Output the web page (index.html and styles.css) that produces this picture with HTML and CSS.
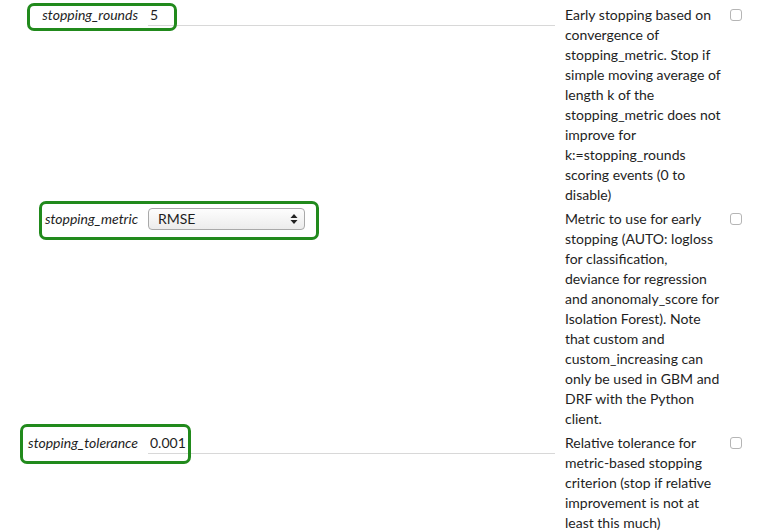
FILE: index.html
```html
<!DOCTYPE html>
<html>
<head>
<meta charset="utf-8">
<link rel="stylesheet" href="styles.css">
</head>
<body>
<div class="form">
  <div class="row">
    <div class="hl hl-1"></div>
    <label class="label">stopping_rounds</label>
    <div class="field"><input class="text" type="text" value="5"></div>
    <div class="desc">Early stopping based on convergence of stopping_metric. Stop if simple moving average of length k of the stopping_metric does not improve for k:=stopping_rounds scoring events (0 to disable)</div>
    <div class="check"><span class="box"></span></div>
  </div>
  <div class="row">
    <div class="hl hl-2"></div>
    <label class="label">stopping_metric</label>
    <div class="field">
      <div class="select"><span>RMSE</span>
        <svg class="arrows" width="8" height="12" viewBox="0 0 8 12"><path d="M4 1 L7.5 5 L0.5 5 Z M4 11 L7.5 7 L0.5 7 Z" fill="#222"/></svg>
      </div>
    </div>
    <div class="desc">Metric to use for early stopping (AUTO: logloss for classification, deviance for regression and anonomaly_score for Isolation Forest). Note that custom and custom_increasing can only be used in GBM and DRF with the Python client.</div>
    <div class="check"><span class="box"></span></div>
  </div>
  <div class="row">
    <div class="hl hl-3"></div>
    <label class="label">stopping_tolerance</label>
    <div class="field"><input class="text" type="text" value="0.001"></div>
    <div class="desc">Relative tolerance for metric-based stopping criterion (stop if relative improvement is not at least this much)</div>
    <div class="check"><span class="box"></span></div>
  </div>
</div>
</body>
</html>
```
FILE: styles.css
```css
html, body {
  margin: 0;
  padding: 0;
  background: #fff;
}
body {
  font-family: Lato, "Open Sans", sans-serif;
  font-size: 14px;
  color: #1e1e1e;
}
.form {
  display: flex;
  flex-direction: column;
  gap: 4px;
  padding-top: 5px;
}
.row {
  position: relative;
  display: grid;
  grid-template-columns: 138px 407px 160px 12px;
  column-gap: 10px;
  align-items: start;
  line-height: 20px;
}
.label {
  text-align: right;
  font-style: italic;
  font-size: 14px;
  line-height: 20px;
}
.field {
  display: flex;
}
.text {
  width: 100%;
  box-sizing: border-box;
  height: 22px;
  margin: 0;
  padding: 0 2px;
  border: none;
  border-bottom: 1px solid #d8d8d8;
  font-family: Lato, sans-serif;
  font-size: 14px;
  color: #1e1e1e;
  background: transparent;
  outline: none;
  margin-top: -1px;
}
.select {
  width: 157px;
  height: 22px;
  box-sizing: border-box;
  border: 1px solid #a9a9a9;
  border-radius: 4px;
  background: linear-gradient(#fdfdfd, #ececec);
  display: flex;
  align-items: center;
  justify-content: space-between;
  padding: 0 6px 0 9px;
  margin-top: -1px;
  font-size: 14px;
}
.check {
  display: flex;
  padding-top: 4px;
  margin-left: -5px;
}
.box {
  width: 10px;
  height: 10px;
  border: 1px solid #b5b5b5;
  border-radius: 3px;
  background: #fff;
}
.hl {
  position: absolute;
  border: 3px solid #218a1c;
  border-radius: 7px;
  box-sizing: border-box;
  pointer-events: none;
}
.hl-1 { left: 27px; top: -2px; width: 150px; height: 28px; }
.hl-2 { left: 39px; top: -8px; width: 280px; height: 39px; }
.hl-3 { left: 20px; top: -9px; width: 171px; height: 40px; }
```
